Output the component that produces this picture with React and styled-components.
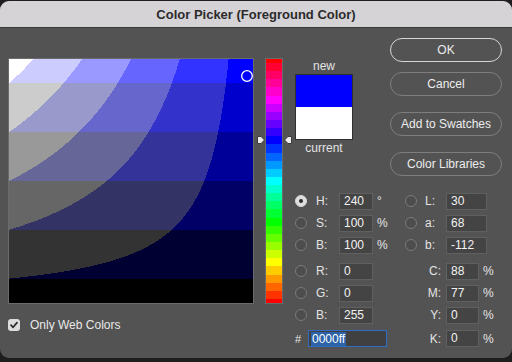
import React, { useMemo } from "react";
import styled, { createGlobalStyle } from "styled-components";

const N = 244;
const snap = (v) => Math.round(v / 51) * 51;

function buildField() {
  const rects = [];
  for (let y = 0; y < N; y++) {
    const B = 1 - (y + 0.5) / N;
    const bc = snap(255 * B);
    let start = 0;
    let cur = snap(255 * B * (1 - 0.5 / N));
    for (let x = 1; x <= N; x++) {
      const v = x < N ? snap(255 * B * (1 - (x + 0.5) / N)) : -1;
      if (v !== cur) {
        rects.push({ x: start, y, w: x - start, fill: `rgb(${cur},${cur},${bc})` });
        start = x;
        cur = v;
      }
    }
  }
  return rects;
}

function hueRgb(h) {
  const f = (n) => {
    const k = (n + h / 60) % 6;
    return 255 * (1 - Math.max(0, Math.min(k, 4 - k, 1)));
  };
  return [f(5), f(3), f(1)].map(snap);
}

function buildHue() {
  const rects = [];
  let start = 0;
  let cur = hueRgb(360 * (1 - 0.5 / N)).join(",");
  for (let y = 1; y <= N; y++) {
    const v = y < N ? hueRgb(360 * (1 - (y + 0.5) / N)).join(",") : "";
    if (v !== cur) {
      rects.push({ y: start, h: y - start, fill: `rgb(${cur})` });
      start = y;
      cur = v;
    }
  }
  return rects;
}

const GlobalStyle = createGlobalStyle`
  html, body { margin: 0; padding: 0; background: #1e1e1e; }
  body { font-family: "Liberation Sans", Arial, Helvetica, sans-serif; }
`;

const Window = styled.div`
  width: 512px;
  height: 357px;
  margin-top: 1px;
  background: #535353;
  border-radius: 9px;
  overflow: hidden;
  display: flex;
  flex-direction: column;
`;

const TitleBar = styled.div`
  height: 26px;
  background: #d6d3d7;
  border-bottom: 1px solid #3a3a3a;
  display: flex;
  align-items: center;
  justify-content: center;
  font-size: 13px;
  font-weight: bold;
  color: #2b2b2b;
`;

const Body = styled.div`
  flex: 1;
  display: flex;
  padding: 10px 10px 0 8px;
`;

const LeftCol = styled.div`
  display: flex;
  flex-direction: column;
  margin-top: 20px;
`;

const Frame = styled.div`
  border: 1px solid #6b6b6b;
  line-height: 0;
`;

const WebOption = styled.label`
  display: flex;
  align-items: center;
  gap: 10px;
  margin-top: 14px;
  font-size: 12px;
  color: #e8e8e8;
`;

const CheckBox = styled.span`
  width: 12px;
  height: 12px;
  border-radius: 3px;
  background: #dcdcdc;
  display: flex;
  align-items: center;
  justify-content: center;
`;

const SliderCol = styled.div`
  display: flex;
  align-self: flex-start;
  margin: 20px 0 0 2px;
`;

const ArrowTrack = styled.div`
  position: relative;
  width: ${(p) => p.$w}px;
  height: 246px;
`;

const Marker = styled.svg`
  position: absolute;
  ${(p) => (p.$side === "left" ? "right: 0;" : "left: 1px;")}
`;

const RightArea = styled.div`
  flex: 1;
  display: flex;
  flex-direction: column;
  margin-left: 2px;
`;

const TopRow = styled.div`
  display: flex;
  justify-content: space-between;
  align-items: flex-start;
`;

const PreviewCol = styled.div`
  margin-top: 20px;
  width: 58px;
  display: flex;
  flex-direction: column;
  align-items: center;
`;

const PreviewLabel = styled.div`
  line-height: 16px;
  font-size: 12px;
  color: #e2e2e2;
`;

const Swatch = styled.div`
  width: 56px;
  height: 64px;
  border: 1px solid #2f2f2f;
  display: flex;
  flex-direction: column;
`;

const SwatchHalf = styled.div`
  flex: 1;
  background: ${(p) => p.$color};
`;

const ButtonsCol = styled.div`
  width: 112px;
  display: flex;
  flex-direction: column;
`;

const Button = styled.button`
  height: 24px;
  margin-top: ${(p) => p.$top || 0}px;
  border-radius: 12px;
  border: ${(p) => (p.$primary ? "1.5px solid #d6d6d6" : "1px solid #7e7e7e")};
  background: transparent;
  color: #ececec;
  font-family: inherit;
  font-size: 12px;
  padding: 0;
`;

const Grid = styled.div`
  display: grid;
  grid-template-columns: 12px 32px 34px 32px 12px 29px 1fr;
  grid-template-rows: ${(p) => p.$rows};
  align-items: center;
  margin-top: ${(p) => p.$top}px;
  font-size: 12px;
  color: #e4e4e4;
`;

const Radio = styled.span`
  width: 12px;
  height: 12px;
  box-sizing: border-box;
  border-radius: 50%;
  border: 1px solid ${(p) => (p.$checked ? "#d8d8d8" : "#7a7a7a")};
  background: ${(p) => (p.$checked ? "#dedede" : "#4d4d4d")};
  display: flex;
  align-items: center;
  justify-content: center;
  &::after {
    content: "";
    display: ${(p) => (p.$checked ? "block" : "none")};
    width: 4px;
    height: 4px;
    border-radius: 50%;
    background: #2a2a2a;
  }
`;

const Label = styled.span`
  padding-left: ${(p) => p.$pl || 0}px;
`;

const RightLabel = styled.span`
  grid-column: span 2;
  text-align: right;
  padding-right: 5px;
`;

const Unit = styled.span`
  padding-left: 4px;
`;

const Box = styled.div`
  width: ${(p) => p.$w}px;
  height: 17px;
  box-sizing: border-box;
  background: #444444;
  border: 1px solid #606060;
  color: #f2f2f2;
  padding-left: 4px;
  line-height: 15px;
  font-size: 12px;
`;

const CmykCell = styled.div`
  display: flex;
  align-items: center;
  gap: 4px;
`;

const Hash = styled.span`
  font-size: 11px;
`;

const HexBox = styled.div`
  grid-column: 2 / span 3;
  margin-left: 1px;
  width: 79px;
  height: 17px;
  box-sizing: border-box;
  background: #404040;
  border: 1px solid #2f6cc2;
  padding-left: 2px;
  display: flex;
  align-items: center;
  font-size: 12px;
`;

const Selected = styled.span`
  background: #2c63a8;
  color: #ffffff;
  line-height: 14px;
  padding: 0 1px;
`;

function ArrowIcon({ dir }) {
  const pts =
    dir === "right"
      ? "0.5,0.5 4,0.5 7.5,4 4,7.5 0.5,7.5"
      : "7.5,0.5 4,0.5 0.5,4 4,7.5 7.5,7.5";
  return <polygon points={pts} fill="#ececec" stroke="#3c3c3c" strokeWidth="1" />;
}

const hsbRows = [
  { l: "H:", v: "240", u: "°", checked: true, r: "L:", rv: "30" },
  { l: "S:", v: "100", u: "%", r: "a:", rv: "68" },
  { l: "B:", v: "100", u: "%", r: "b:", rv: "-112" },
];
const rgbRows = [
  { l: "R:", v: "0", r: "C:", rv: "88" },
  { l: "G:", v: "0", r: "M:", rv: "77" },
  { l: "B:", v: "255", r: "Y:", rv: "0" },
];

export default function App() {
  const field = useMemo(buildField, []);
  const hue = useMemo(buildHue, []);
  const hueVal = 240;
  const markerTop = 1 + (1 - hueVal / 360) * N - 4;

  return (
    <>
      <GlobalStyle />
      <Window>
        <TitleBar>Color Picker (Foreground Color)</TitleBar>
        <Body>
          <LeftCol>
            <Frame>
              <svg width={N} height={N} shapeRendering="crispEdges">
                {field.map((r, i) => (
                  <rect key={i} x={r.x} y={r.y} width={r.w} height={1} fill={r.fill} />
                ))}
                <circle cx={238} cy={17} r={5.3} fill="none" stroke="#ffffff" strokeWidth="1.3" shapeRendering="auto" />
              </svg>
            </Frame>
            <WebOption>
              <CheckBox>
                <svg width="10" height="10" viewBox="0 0 10 10">
                  <path d="M2 5.2 L4.1 7.3 L8 2.6" fill="none" stroke="#2a2a2a" strokeWidth="1.7" strokeLinecap="round" strokeLinejoin="round" />
                </svg>
              </CheckBox>
              Only Web Colors
            </WebOption>
          </LeftCol>

          <SliderCol>
            <ArrowTrack $w={9}>
              <Marker $side="left" width="8" height="8" style={{ top: markerTop }}>
                <ArrowIcon dir="right" />
              </Marker>
            </ArrowTrack>
            <Frame>
              <svg width={16} height={N} shapeRendering="crispEdges">
                {hue.map((r, i) => (
                  <rect key={i} x={0} y={r.y} width={16} height={r.h} fill={r.fill} />
                ))}
              </svg>
            </Frame>
            <ArrowTrack $w={10}>
              <Marker $side="right" width="8" height="8" style={{ top: markerTop }}>
                <ArrowIcon dir="left" />
              </Marker>
            </ArrowTrack>
          </SliderCol>

          <RightArea>
            <TopRow>
              <PreviewCol>
                <PreviewLabel>new</PreviewLabel>
                <Swatch>
                  <SwatchHalf $color="#0000ff" />
                  <SwatchHalf $color="#ffffff" />
                </Swatch>
                <PreviewLabel>current</PreviewLabel>
              </PreviewCol>
              <ButtonsCol>
                <Button $primary>OK</Button>
                <Button $top={10}>Cancel</Button>
                <Button $top={16}>Add to Swatches</Button>
                <Button $top={16}>Color Libraries</Button>
              </ButtonsCol>
            </TopRow>

            <Grid $top={14} $rows="22px 22px 22px">
              {hsbRows.map((row) => (
                <React.Fragment key={row.l}>
                  <Radio $checked={row.checked} />
                  <Label $pl={9}>{row.l}</Label>
                  <Box $w={34}>{row.v}</Box>
                  <Unit>{row.u}</Unit>
                  <Radio />
                  <Label $pl={8}>{row.r}</Label>
                  <Box $w={41}>{row.rv}</Box>
                </React.Fragment>
              ))}
            </Grid>

            <Grid $top={4} $rows="22px 22px 22px 25px">
              {rgbRows.map((row) => (
                <React.Fragment key={row.r}>
                  <Radio />
                  <Label $pl={9}>{row.l}</Label>
                  <Box $w={34}>{row.v}</Box>
                  <span />
                  <RightLabel>{row.r}</RightLabel>
                  <CmykCell>
                    <Box $w={33}>{row.rv}</Box>
                    <span>%</span>
                  </CmykCell>
                </React.Fragment>
              ))}
              <Hash>#</Hash>
              <HexBox>
                <Selected>0000ff</Selected>
              </HexBox>
              <RightLabel>K:</RightLabel>
              <CmykCell>
                <Box $w={33}>0</Box>
                <span>%</span>
              </CmykCell>
            </Grid>
          </RightArea>
        </Body>
      </Window>
    </>
  );
}
